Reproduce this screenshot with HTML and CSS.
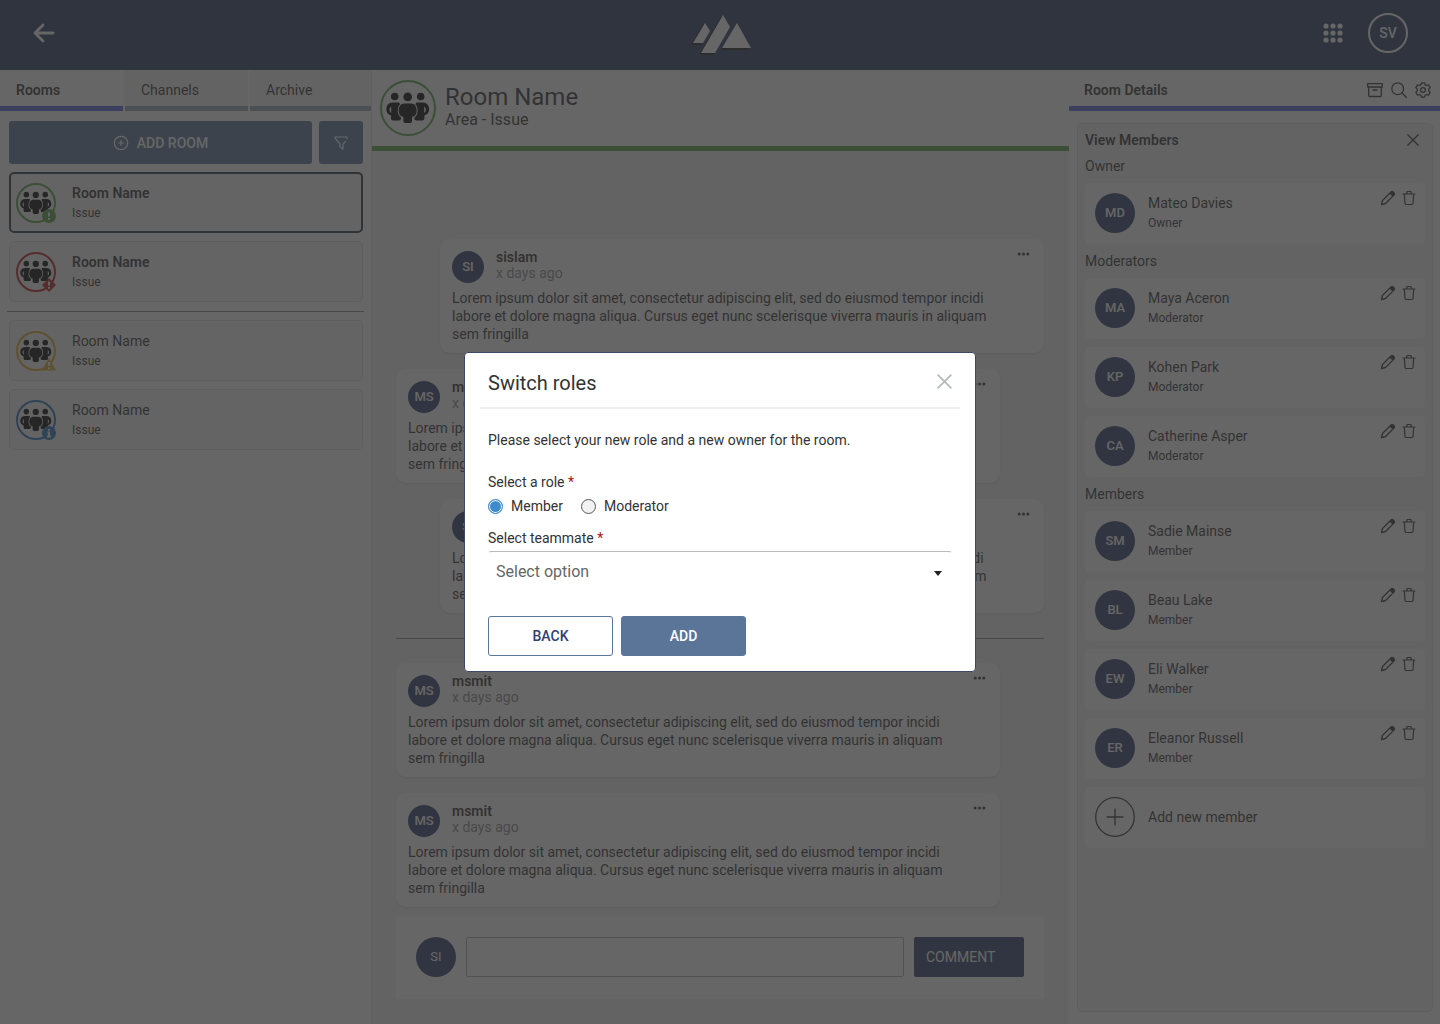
FILE: index.html
```html
<!DOCTYPE html>
<html lang="en">
<head>
  <meta charset="UTF-8">
  <meta name="viewport" content="width=device-width, initial-scale=1.0">
  <title>Rooms</title>
  <link rel="stylesheet" href="styles.css">
</head>
<body>
  <!-- Icons used more than once -->
  <svg class="sprite" aria-hidden="true">
    <symbol id="people" viewBox="0 0 44 32">
      <circle cx="8.7" cy="4.500" r="3.800"/>
      <circle cx="34.700" cy="4.500" r="3.800"/>
      <path fill-rule="evenodd" d="M6.500 10.500H13l2 3v13a2 2 0 0 1-2 2H7a2 2 0 0 1-2-2v-3C2 22.500.3 20.500.3 17.500c0-4 2.200-7 6.200-7zM5.200 14.500c-2.200 1.500-2.200 5 0 6.500z"/>
      <path fill-rule="evenodd" d="M36.900 10.500h-6.500l-2 3v13a2 2 0 0 0 2 2h6a2 2 0 0 0 2-2v-3c3-1 4.700-3 4.700-6 0-4-2.200-7-6.200-7zM38.200 14.500c2.200 1.500 2.200 5 0 6.500z"/>
      <path class="halo" d="M18.500 11.500h6.400c4 0 5.800 3.500 5.800 7s-1.800 6-4.700 6.500V29a2 2 0 0 1-2 2h-4.600a2 2 0 0 1-2-2v-4c-2.900-.5-4.700-3-4.700-6.500s1.800-7 5.800-7z"/>
      <circle cx="21.700" cy="4.900" r="4.300"/>
      <path fill-rule="evenodd" d="M18.500 11.500h6.400c4 0 5.800 3.500 5.800 7s-1.800 6-4.700 6.500V29a2 2 0 0 1-2 2h-4.600a2 2 0 0 1-2-2v-4c-2.900-.5-4.700-3-4.700-6.500s1.800-7 5.800-7zM17.300 15.500c-2.200 1.500-2.200 5 0 6.500zM26.100 15.500c2.200 1.500 2.200 5 0 6.500z"/>
    </symbol>
    <symbol id="pencil" viewBox="0 0 16 16">
      <path d="M1.500 14.500l1-4 8.500-8.500a1.500 1.500 0 0 1 2.200 0l.8.8a1.500 1.500 0 0 1 0 2.200L5.500 13.500zM10 3l3 3" fill="none" stroke="currentColor" stroke-width="1.300" stroke-linejoin="round"/>
      <path d="M10 3l1.500-1.300a1.500 1.500 0 0 1 2 0l.8.8a1.500 1.500 0 0 1 0 2L13 6z" fill="currentColor"/>
    </symbol>
    <symbol id="trash" viewBox="0 0 16 16">
      <path d="M2 4h12M5.500 4l.7-2.500h3.600L10.500 4M3.300 4l.7 9.500a1.200 1.200 0 0 0 1.200 1h5.600a1.200 1.200 0 0 0 1.200-1l.7-9.500" fill="none" stroke="currentColor" stroke-width="1.200" stroke-linecap="round" stroke-linejoin="round"/>
    </symbol>
    <symbol id="dots" viewBox="0 0 12 4">
      <circle cx="1.700" cy="2" r="1.500"/><circle cx="6" cy="2" r="1.500"/><circle cx="10.300" cy="2" r="1.500"/>
    </symbol>
    <symbol id="close" viewBox="0 0 16 16">
      <path d="M2 2l12 12M14 2L2 14" fill="none" stroke="currentColor" stroke-width="1.600" stroke-linecap="round"/>
    </symbol>
  </svg>

  <!-- Top bar -->
  <header class="topbar">
    <button class="icon-btn" aria-label="Back">
      <svg width="22" height="20" viewBox="0 0 22 20"><path d="M10 2L2 10l8 8M2 10h18" fill="none" stroke="currentColor" stroke-width="2.800" stroke-linecap="round" stroke-linejoin="round"/></svg>
    </button>
    <svg class="logo" width="60" height="42" viewBox="0 0 60 42">
      <g fill="#1c1c1c"><path d="M0 31L12 9l5 9-7 13z"/><path d="M8 41L30 2l6 12-14 27z"/><path d="M30 36L46 10l12 26z"/></g>
      <g fill="#fff"><path d="M2 29L14 9l5 8-7 12z"/><path d="M10 39L32 1l7 12-15 26z"/><path d="M31 34L46 9l14 25z"/></g>
    </svg>
    <div class="topbar-right">
      <button class="icon-btn" aria-label="Apps">
        <svg width="20" height="20" viewBox="0 0 20 20" fill="currentColor"><circle cx="3" cy="3" r="2.600"/><circle cx="10" cy="3" r="2.600"/><circle cx="17" cy="3" r="2.600"/><circle cx="3" cy="10" r="2.600"/><circle cx="10" cy="10" r="2.600"/><circle cx="17" cy="10" r="2.600"/><circle cx="3" cy="17" r="2.600"/><circle cx="10" cy="17" r="2.600"/><circle cx="17" cy="17" r="2.600"/></svg>
      </button>
      <button class="avatar profile">SV</button>
    </div>
  </header>

  <div class="layout">
    <!-- Rooms list -->
    <aside class="sidebar">
      <nav class="tabs">
        <a href="#rooms" class="tab active">Rooms</a>
        <a href="#channels" class="tab">Channels</a>
        <a href="#archive" class="tab">Archive</a>
      </nav>
      <div class="room-actions">
        <button class="add-room">
          <svg width="16" height="16" viewBox="0 0 16 16" fill="none" stroke="currentColor" stroke-width="1.200"><circle cx="8" cy="8" r="6.700"/><path d="M8 5v6M5 8h6"/></svg>
          ADD ROOM
        </button>
        <button class="filter" aria-label="Filter">
          <svg width="14" height="14" viewBox="0 0 14 14" fill="none" stroke="currentColor" stroke-width="1.200" stroke-linejoin="round"><path d="M13 3V1H1v1l5 6v3l3 2V8l3-3"/></svg>
        </button>
      </div>
      <div class="rooms">
        <a href="#room-1" class="room selected unread">
          <span class="group-icon green">
            <svg class="people"><use href="#people"/></svg>
            <svg class="status" viewBox="0 0 14 14"><circle cx="7" cy="7" r="7"/><path class="mark" d="M7 3.500v4M7 9v1.800"/></svg>
          </span>
          <span class="info"><span class="name">Room Name</span><span class="role">Issue</span></span>
        </a>
        <a href="#room-2" class="room unread">
          <span class="group-icon red">
            <svg class="people"><use href="#people"/></svg>
            <svg class="status" viewBox="0 0 14 14"><path d="M7 0l7 7-7 7-7-7z"/><path class="mark" d="M7 3.500v4M7 9v1.800"/></svg>
          </span>
          <span class="info"><span class="name">Room Name</span><span class="role">Issue</span></span>
        </a>
        <hr>
        <a href="#room-3" class="room">
          <span class="group-icon yellow">
            <svg class="people"><use href="#people"/></svg>
            <svg class="status" viewBox="0 0 14 14"><path d="M7 1l7 12.500H0z"/><path class="mark" d="M7 5v4M7 10.500v1.500"/></svg>
          </span>
          <span class="info"><span class="name">Room Name</span><span class="role">Issue</span></span>
        </a>
        <a href="#room-4" class="room">
          <span class="group-icon blue">
            <svg class="people"><use href="#people"/></svg>
            <svg class="status" viewBox="0 0 14 14"><circle cx="7" cy="7" r="7"/><path class="mark" d="M7 3v1.800M5.500 6.500H7v4M5 10.500h4"/></svg>
          </span>
          <span class="info"><span class="name">Room Name</span><span class="role">Issue</span></span>
        </a>
      </div>
    </aside>

    <!-- Conversation -->
    <main class="chat">
      <div class="chat-header">
        <span class="group-icon large green"><svg class="people"><use href="#people"/></svg></span>
        <div>
          <h1>Room Name</h1>
          <p>Area - Issue</p>
        </div>
      </div>
      <div class="messages">
        <article class="message own">
          <div class="message-top">
            <span class="avatar small">SI</span>
            <div class="author"><strong>sislam</strong><time>x days ago</time></div>
            <button class="icon-btn more" aria-label="More"><svg><use href="#dots"/></svg></button>
          </div>
          <p>Lorem ipsum dolor sit amet, consectetur adipiscing elit, sed do eiusmod tempor incidi<br>labore et dolore magna aliqua. Cursus eget nunc scelerisque viverra mauris in aliquam<br>sem fringilla</p>
        </article>
        <article class="message">
          <div class="message-top">
            <span class="avatar small">MS</span>
            <div class="author"><strong>msmit</strong><time>x days ago</time></div>
            <button class="icon-btn more" aria-label="More"><svg><use href="#dots"/></svg></button>
          </div>
          <p>Lorem ipsum dolor sit amet, consectetur adipiscing elit, sed do eiusmod tempor incidi<br>labore et dolore magna aliqua. Cursus eget nunc scelerisque viverra mauris in aliquam<br>sem fringilla</p>
        </article>
        <article class="message own">
          <div class="message-top">
            <span class="avatar small">SI</span>
            <div class="author"><strong>sislam</strong><time>x days ago</time></div>
            <button class="icon-btn more" aria-label="More"><svg><use href="#dots"/></svg></button>
          </div>
          <p>Lorem ipsum dolor sit amet, consectetur adipiscing elit, sed do eiusmod tempor incidi<br>labore et dolore magna aliqua. Cursus eget nunc scelerisque viverra mauris in aliquam<br>sem fringilla</p>
        </article>
        <hr>
        <article class="message">
          <div class="message-top">
            <span class="avatar small">MS</span>
            <div class="author"><strong>msmit</strong><time>x days ago</time></div>
            <button class="icon-btn more" aria-label="More"><svg><use href="#dots"/></svg></button>
          </div>
          <p>Lorem ipsum dolor sit amet, consectetur adipiscing elit, sed do eiusmod tempor incidi<br>labore et dolore magna aliqua. Cursus eget nunc scelerisque viverra mauris in aliquam<br>sem fringilla</p>
        </article>
        <article class="message">
          <div class="message-top">
            <span class="avatar small">MS</span>
            <div class="author"><strong>msmit</strong><time>x days ago</time></div>
            <button class="icon-btn more" aria-label="More"><svg><use href="#dots"/></svg></button>
          </div>
          <p>Lorem ipsum dolor sit amet, consectetur adipiscing elit, sed do eiusmod tempor incidi<br>labore et dolore magna aliqua. Cursus eget nunc scelerisque viverra mauris in aliquam<br>sem fringilla</p>
        </article>
      </div>
      <form class="comment">
        <span class="avatar">SI</span>
        <input type="text" aria-label="Comment">
        <button type="button">COMMENT</button>
      </form>
    </main>

    <!-- Room details -->
    <aside class="details">
      <div class="details-header">
        <h2>Room Details</h2>
        <button class="icon-btn" aria-label="Archive">
          <svg width="16" height="16" viewBox="0 0 16 16" fill="none" stroke="currentColor" stroke-width="1.300" stroke-linejoin="round"><path d="M.7 1.700h14.600v3.300H.7zM1.700 5v8.500a1 1 0 0 0 1 1h10.600a1 1 0 0 0 1-1V5M5.500 8h5"/></svg>
        </button>
        <button class="icon-btn" aria-label="Search">
          <svg width="16" height="16" viewBox="0 0 16 16" fill="none" stroke="currentColor" stroke-width="1.300" stroke-linecap="round"><circle cx="6.700" cy="6.700" r="5.900"/><path d="M11 11l4.500 4.500"/></svg>
        </button>
        <button class="icon-btn" aria-label="Settings">
          <svg width="16" height="16" viewBox="0 0 16 16" fill="none" stroke="currentColor" stroke-width="1.300" stroke-linejoin="round"><circle cx="8" cy="8" r="2.400"/><path d="M6.500.8h3l.6 2 1.300.7 2.100-.6 1.700 2.700-1.500 1.500v1.800l1.500 1.500-1.700 2.700-2.100-.6-1.300.7-.6 2h-3l-.6-2-1.300-.7-2.100.6L.8 10.400l1.500-1.500V7.100L.8 5.600l1.700-2.700 2.100.6 1.300-.7z"/></svg>
        </button>
      </div>
      <section class="members">
        <div class="members-title">
          <h2>View Members</h2>
          <button class="icon-btn" aria-label="Close"><svg width="14" height="14"><use href="#close"/></svg></button>
        </div>
        <h3>Owner</h3>
        <ul>
          <li class="member">
            <span class="avatar">MD</span>
            <span class="info"><span class="name">Mateo Davies</span><span class="role">Owner</span></span>
            <span class="tools"><button class="icon-btn" aria-label="Edit"><svg><use href="#pencil"/></svg></button><button class="icon-btn" aria-label="Delete"><svg><use href="#trash"/></svg></button></span>
          </li>
        </ul>
        <h3>Moderators</h3>
        <ul>
          <li class="member">
            <span class="avatar">MA</span>
            <span class="info"><span class="name">Maya Aceron</span><span class="role">Moderator</span></span>
            <span class="tools"><button class="icon-btn" aria-label="Edit"><svg><use href="#pencil"/></svg></button><button class="icon-btn" aria-label="Delete"><svg><use href="#trash"/></svg></button></span>
          </li>
          <li class="member">
            <span class="avatar">KP</span>
            <span class="info"><span class="name">Kohen Park</span><span class="role">Moderator</span></span>
            <span class="tools"><button class="icon-btn" aria-label="Edit"><svg><use href="#pencil"/></svg></button><button class="icon-btn" aria-label="Delete"><svg><use href="#trash"/></svg></button></span>
          </li>
          <li class="member">
            <span class="avatar">CA</span>
            <span class="info"><span class="name">Catherine Asper</span><span class="role">Moderator</span></span>
            <span class="tools"><button class="icon-btn" aria-label="Edit"><svg><use href="#pencil"/></svg></button><button class="icon-btn" aria-label="Delete"><svg><use href="#trash"/></svg></button></span>
          </li>
        </ul>
        <h3>Members</h3>
        <ul>
          <li class="member">
            <span class="avatar">SM</span>
            <span class="info"><span class="name">Sadie Mainse</span><span class="role">Member</span></span>
            <span class="tools"><button class="icon-btn" aria-label="Edit"><svg><use href="#pencil"/></svg></button><button class="icon-btn" aria-label="Delete"><svg><use href="#trash"/></svg></button></span>
          </li>
          <li class="member">
            <span class="avatar">BL</span>
            <span class="info"><span class="name">Beau Lake</span><span class="role">Member</span></span>
            <span class="tools"><button class="icon-btn" aria-label="Edit"><svg><use href="#pencil"/></svg></button><button class="icon-btn" aria-label="Delete"><svg><use href="#trash"/></svg></button></span>
          </li>
          <li class="member">
            <span class="avatar">EW</span>
            <span class="info"><span class="name">Eli Walker</span><span class="role">Member</span></span>
            <span class="tools"><button class="icon-btn" aria-label="Edit"><svg><use href="#pencil"/></svg></button><button class="icon-btn" aria-label="Delete"><svg><use href="#trash"/></svg></button></span>
          </li>
          <li class="member">
            <span class="avatar">ER</span>
            <span class="info"><span class="name">Eleanor Russell</span><span class="role">Member</span></span>
            <span class="tools"><button class="icon-btn" aria-label="Edit"><svg><use href="#pencil"/></svg></button><button class="icon-btn" aria-label="Delete"><svg><use href="#trash"/></svg></button></span>
          </li>
          <li>
            <button class="member add-member">
              <svg width="40" height="40" viewBox="0 0 40 40" fill="none" stroke="currentColor" stroke-width="1.300"><circle cx="20" cy="20" r="19.300"/><path d="M20 12v16M12 20h16" stroke-linecap="round"/></svg>
              Add new member
            </button>
          </li>
        </ul>
      </section>
    </aside>
  </div>

  <!-- Switch roles dialog -->
  <div class="overlay">
    <form class="modal" role="dialog" aria-modal="true" aria-labelledby="modal-title">
      <div class="modal-header">
        <h2 id="modal-title">Switch roles</h2>
        <button type="button" class="icon-btn modal-close" aria-label="Close"><svg width="17" height="17"><use href="#close"/></svg></button>
      </div>
      <div class="modal-body">
        <p>Please select your new role and a new owner for the room.</p>
        <fieldset>
          <legend>Select a role <span class="required">*</span></legend>
          <div class="radios">
            <label><input type="radio" name="role" checked> Member</label>
            <label><input type="radio" name="role"> Moderator</label>
          </div>
        </fieldset>
        <label class="field-label" for="teammate">Select teammate <span class="required">*</span></label>
        <div class="select">
          <select id="teammate">
            <option>Select option</option>
          </select>
        </div>
        <div class="modal-actions">
          <button type="button" class="btn back">BACK</button>
          <button type="button" class="btn add">ADD</button>
        </div>
      </div>
    </form>
  </div>
</body>
</html>
```
FILE: styles.css
```css
/* General */
* {
  box-sizing: border-box;
}

body {
  margin: 0;
  min-height: 100vh;
  display: flex;
  flex-direction: column;
  background: #fff;
  color: #333;
  font-family: Roboto, Arial, sans-serif;
  font-size: 14px;
  line-height: 20px;
}

h1, h2, h3, p, ul, fieldset {
  margin: 0;
  padding: 0;
}

h2 {
  font-size: 14px;
  font-weight: 600;
}

ul {
  list-style: none;
}

a {
  color: inherit;
  text-decoration: none;
}

button, input, select {
  font: inherit;
  color: inherit;
}

button {
  border: 0;
  padding: 0;
  background: none;
  cursor: pointer;
}

svg {
  display: block;
}

.sprite {
  display: none;
}

.icon-btn {
  flex: none;
}

/* Avatars */
.avatar {
  display: flex;
  align-items: center;
  justify-content: center;
  flex: none;
  width: 40px;
  height: 40px;
  border-radius: 50%;
  background: #2b3e6c;
  color: #fff;
  font-size: 13px;
  font-weight: 500;
}

.avatar.small {
  width: 32px;
  height: 32px;
}

.group-icon {
  position: relative;
  display: flex;
  align-items: center;
  justify-content: center;
  flex: none;
  width: 40px;
  height: 40px;
  border: 2px solid;
  border-radius: 50%;
}

.group-icon.large {
  width: 56px;
  height: 56px;
}

.group-icon .people {
  width: 32px;
  height: 24px;
  fill: #000;
}

.group-icon.large .people {
  width: 44px;
  height: 32px;
}

.halo {
  stroke: #f7f7f7;
  stroke-width: 2;
}

.status {
  position: absolute;
  right: -2px;
  bottom: -2px;
  width: 14px;
  height: 14px;
  fill: currentColor;
}

.mark {
  fill: none;
  stroke: #fff;
  stroke-width: 2;
}

.green { color: #55a346; }
.red { color: #c01818; }
.yellow { color: #e0ab2a; }
.blue { color: #2a70c0; }

/* Top bar */
.topbar {
  display: grid;
  grid-template-columns: 1fr auto 1fr;
  align-items: center;
  height: 70px;
  padding: 0 32px 4px 33px;
  background: #2b3b60;
  color: #fff;
}

.topbar-right {
  display: flex;
  align-items: center;
  justify-content: flex-end;
  gap: 25px;
}

.profile {
  border: 2px solid #fff;
  background: none;
  font-size: 14px;
}

.logo {
  margin-top: 4px;
}

/* Columns */
.layout {
  flex: 1;
  display: grid;
  grid-template-columns: 372px 1fr 371px;
}

.sidebar {
  border-right: 1px solid #e4e4e4;
}

.tabs {
  display: grid;
  grid-template-columns: 1fr 1fr 121px;
  gap: 2px;
}

.tab {
  height: 41px;
  padding: 10px 16px 0;
  border-bottom: 5px solid #97a7b3;
  background: #f4f4f4;
}

.tab.active {
  border-color: #5a64dc;
  background: #fff;
  font-weight: 600;
}

.room-actions {
  display: flex;
  gap: 7px;
  padding: 10px 8px 8px 9px;
}

.add-room, .filter {
  display: flex;
  align-items: center;
  justify-content: center;
  gap: 8px;
  height: 43px;
  border-radius: 3px;
  background: #5b7599;
  color: #fff;
  font-weight: 500;
}

.add-room {
  flex: 1;
}

.filter {
  width: 44px;
}

.rooms {
  display: flex;
  flex-direction: column;
  gap: 8px;
  padding: 0 8px 0 9px;
}

.rooms hr {
  width: calc(100% + 3px);
  height: 2px;
  margin: 0 -2px;
  border: 0;
  border-bottom: 1px solid #888;
}

.room {
  display: flex;
  align-items: center;
  gap: 16px;
  height: 61px;
  padding: 0 6px;
  border: 1px solid #e0e0e0;
  border-radius: 5px;
  background: #f7f7f7;
}

.room.selected {
  padding: 0 5px;
  border: 2px solid #25384a;
}

.info {
  display: flex;
  flex-direction: column;
}

.unread .name {
  font-weight: 600;
}

.role {
  font-size: 12px;
}

/* Conversation */
.chat {
  display: flex;
  flex-direction: column;
  background: #f2f2f2;
}

.chat-header {
  display: flex;
  gap: 9px;
  height: 81px;
  padding: 10px 8px 0;
  border-bottom: 5px solid #55a346;
  background: #fff;
}

.chat-header h1 {
  padding-top: 4px;
  font-size: 24px;
  line-height: 26px;
  font-weight: 400;
}

.chat-header p {
  font-size: 16px;
}

.messages {
  flex: 1;
  display: flex;
  flex-direction: column;
  justify-content: flex-end;
  gap: 16px;
  padding: 16px 25px 9px 24px;
}

.messages hr {
  width: 100%;
  margin: 9px 0 8px;
  border: 0;
  border-top: 1px solid #888;
}

.message {
  margin-right: 44px;
  padding: 12px 12px 10px;
  border-radius: 10px;
  background: #fff;
  box-shadow: 0 1px 2px rgba(0, 0, 0, 0.1);
}

.message.own {
  margin: 0 0 0 44px;
}

.message-top {
  display: flex;
  gap: 12px;
  margin-bottom: 6px;
  line-height: 16px;
}

.author {
  margin-top: -2px;
}

.author strong, .author time {
  display: block;
}

.author strong {
  font-weight: 600;
}

.author time {
  color: #8c8c8c;
}

.message p {
  line-height: 18px;
}

.more {
  align-self: flex-start;
  margin-left: auto;
  padding: 1px 2px;
}

.more svg {
  width: 13px;
  height: 4px;
  fill: #333;
}

.comment {
  display: flex;
  align-items: center;
  gap: 10px;
  height: 83px;
  margin: 0 25px 25px 24px;
  padding: 0 20px 2px;
  background: #fff;
}

.comment .avatar {
  font-weight: 400;
}

.comment input {
  flex: 1;
  height: 40px;
  padding: 0 8px;
  border: 1px solid #aaa;
  border-radius: 2px;
  background: #fff;
}

.comment button {
  width: 110px;
  height: 40px;
  padding: 0 12px;
  border-radius: 2px;
  background: #2b3e6c;
  color: #fff;
  text-align: left;
}

/* Room details */
.details {
  display: flex;
  flex-direction: column;
}

.details-header {
  display: flex;
  align-items: center;
  gap: 8px;
  height: 41px;
  padding: 3px 9px 0 15px;
  border-bottom: 5px solid #5a64dc;
}

.details-header h2 {
  flex: 1;
}

.members {
  flex: 1;
  margin: 12px 7px 12px 8px;
  padding: 7px;
  border: 1px solid #e0e0e0;
  border-radius: 5px;
  background: #f4f4f4;
}

.members-title {
  display: flex;
  align-items: center;
  justify-content: space-between;
  height: 18px;
  padding-right: 5px;
}

.members h3 {
  font-size: 14px;
  line-height: 34px;
  font-weight: 400;
}

.members ul {
  display: flex;
  flex-direction: column;
  gap: 8px;
}

.member {
  display: flex;
  align-items: center;
  gap: 13px;
  width: 100%;
  height: 61px;
  padding: 0 8px 1px 10px;
  border-radius: 5px;
  background: #fff;
}

.tools {
  display: flex;
  align-self: flex-start;
  gap: 5px;
  margin: 7px 0 0 auto;
}

.tools svg {
  width: 16px;
  height: 16px;
}

/* Switch roles dialog */
.overlay {
  position: fixed;
  inset: 0;
  display: flex;
  align-items: center;
  justify-content: center;
  background: rgba(51, 51, 51, 0.75);
}

.modal {
  width: 512px;
  border: 1px solid #3c4a66;
  border-radius: 4px;
  background: #fff;
}

.modal-header {
  display: flex;
  align-items: center;
  justify-content: space-between;
  height: 56px;
  margin: 0 15px;
  padding: 6px 7px 0 8px;
  border-bottom: 2px solid #f0f0f0;
}

.modal-header h2 {
  font-size: 20px;
  font-weight: 400;
}

.modal-close {
  padding-bottom: 3px;
  color: #b4b8ba;
}

.modal-body {
  padding: 21px 23px 15px;
}

.modal fieldset {
  margin: 22px 0 12px;
  border: 0;
}

.modal legend {
  padding: 0;
}

.required {
  color: #b01010;
}

.radios {
  display: flex;
  gap: 18px;
  padding-top: 4px;
}

.radios label {
  display: flex;
  align-items: center;
  gap: 8px;
}

.radios input {
  appearance: none;
  width: 15px;
  height: 15px;
  margin: 0;
  border: 1px solid #555;
  border-radius: 50%;
  background: #f2f2f2;
}

.radios input:checked {
  border-color: #3d8bcd;
  background: #3d8bcd;
  box-shadow: inset 0 0 0 1px #fff;
}

.field-label {
  display: block;
}

.select {
  position: relative;
  margin: 3px 0 24px;
}

.select::after {
  content: "";
  position: absolute;
  top: 20px;
  right: 10px;
  border: 4px solid transparent;
  border-top: 5px solid #222;
  border-bottom: 0;
  pointer-events: none;
}

.select select {
  appearance: none;
  width: 100%;
  height: 41px;
  padding: 0 7px;
  border: 1px solid transparent;
  border-top-color: #bbb;
  border-radius: 3px;
  background: #fff;
  color: #666;
  font-size: 16px;
}

.modal-actions {
  display: flex;
  gap: 8px;
}

.btn {
  width: 125px;
  height: 40px;
  border: 1px solid #5b7599;
  border-radius: 3px;
  font-weight: 500;
}

.btn.back {
  color: #2b4270;
}

.btn.add {
  background: #5b7599;
  color: #fff;
}
```
